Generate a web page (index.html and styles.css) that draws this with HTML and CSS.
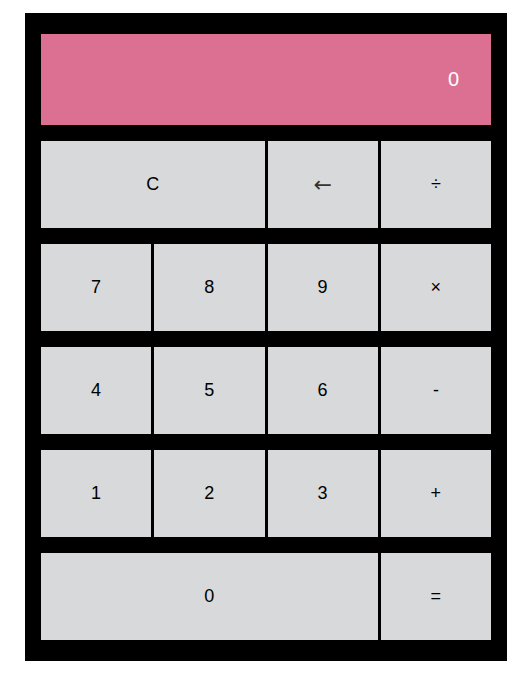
FILE: index.html
```html
<!DOCTYPE html>
<html>
<head>
<meta charset="utf-8">
<link rel="stylesheet" href="styles.css">
</head>
<body>
<div class="calc">
  <div class="display">0</div>
  <button class="key span2">C</button>
  <button class="key"><span class="arrow">←</span></button>
  <button class="key">÷</button>
  <button class="key">7</button>
  <button class="key">8</button>
  <button class="key">9</button>
  <button class="key">×</button>
  <button class="key">4</button>
  <button class="key">5</button>
  <button class="key">6</button>
  <button class="key">-</button>
  <button class="key">1</button>
  <button class="key">2</button>
  <button class="key">3</button>
  <button class="key">+</button>
  <button class="key span3">0</button>
  <button class="key">=</button>
</div>
</body>
</html>
```
FILE: styles.css
```css
html, body {
  margin: 0;
  padding: 0;
  background: #ffffff;
}
body {
  font-family: "Liberation Sans", Arial, sans-serif;
}
.calc {
  box-sizing: border-box;
  width: 482px;
  margin: 13px 0 0 25px;
  padding: 21px 16px;
  background: #000000;
  display: grid;
  grid-template-columns: repeat(4, 1fr);
  grid-template-rows: 91px repeat(5, 87px);
  column-gap: 3px;
  row-gap: 16px;
}
.display {
  grid-column: span 4;
  background: #db7093;
  color: #ffffff;
  font-size: 20px;
  display: flex;
  align-items: center;
  justify-content: flex-end;
  padding-right: 32px;
  box-sizing: border-box;
}
.key {
  border: none;
  margin: 0;
  padding: 0;
  background: #d8d9da;
  color: #000000;
  font-family: "Liberation Sans", Arial, sans-serif;
  font-size: 18px;
}
.arrow {
  font-family: "DejaVu Sans", sans-serif;
  font-size: 22px;
  color: #333333;
}
.span2 { grid-column: span 2; }
.span3 { grid-column: span 3; }
```
